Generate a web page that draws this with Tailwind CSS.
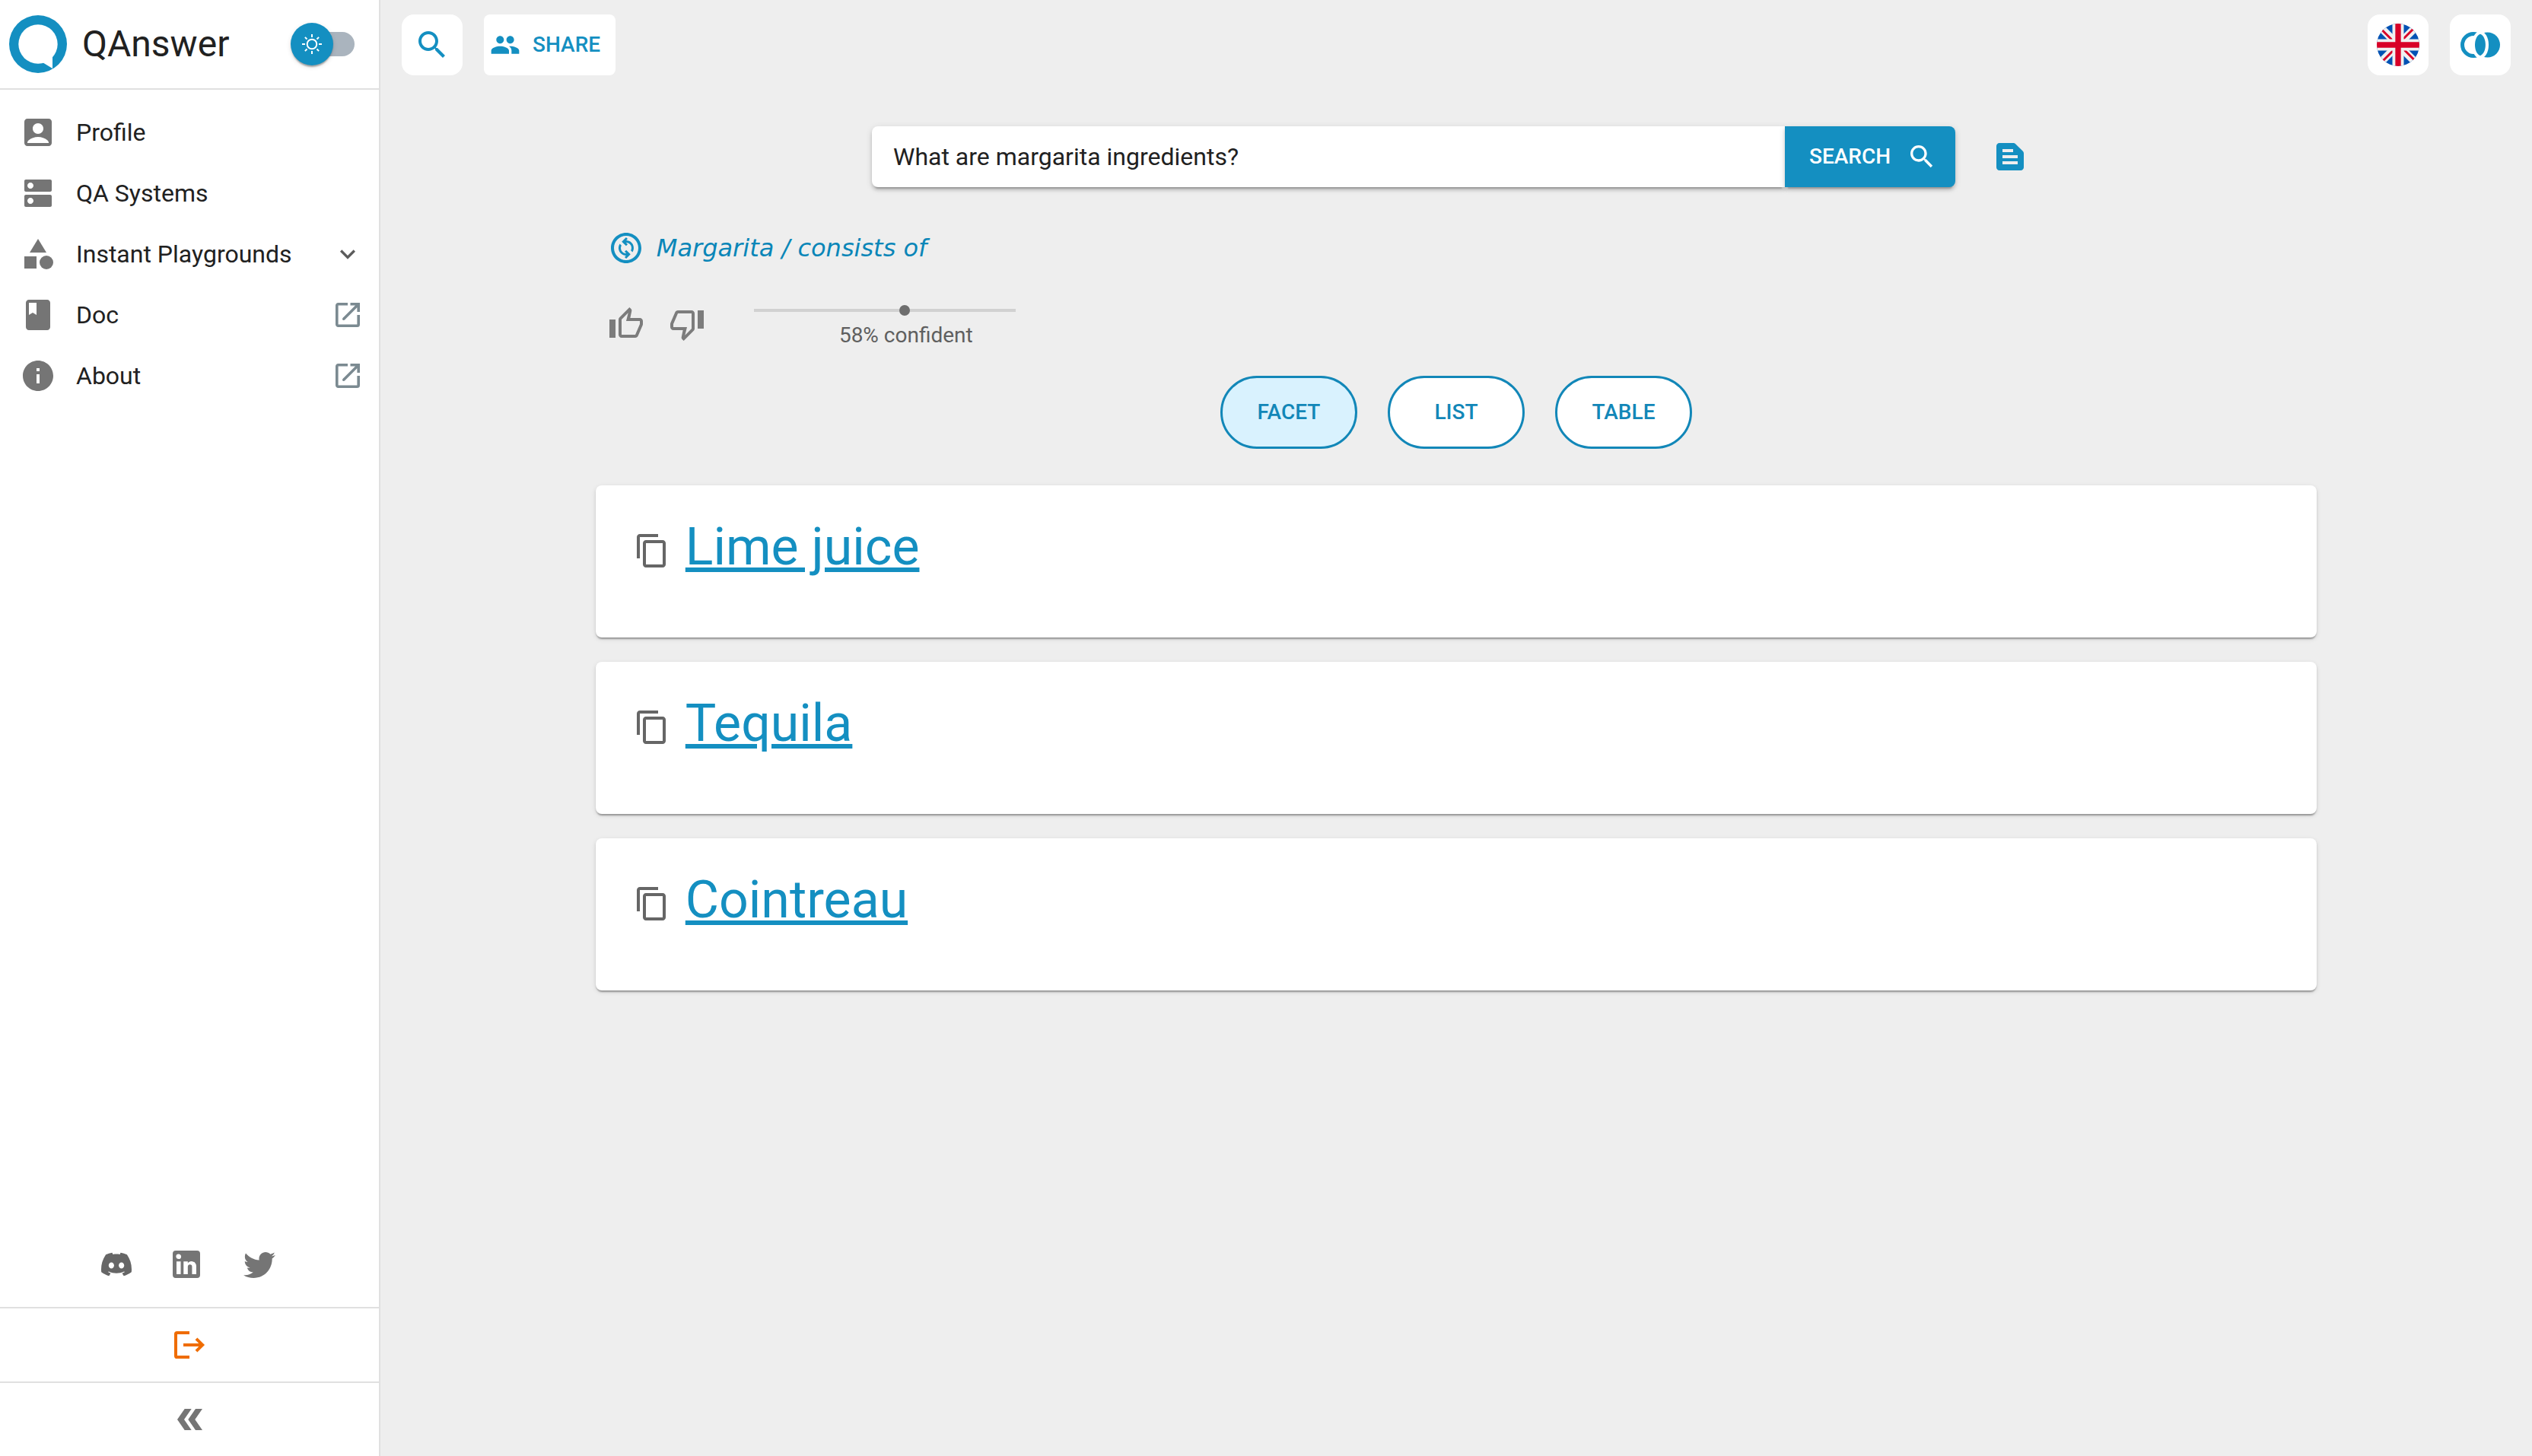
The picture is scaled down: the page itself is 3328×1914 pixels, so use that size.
<!DOCTYPE html>
<html lang="en">
<head>
<meta charset="utf-8">
<meta name="viewport" content="width=device-width, initial-scale=1">
<title>QAnswer</title>
<script src="https://cdn.jsdelivr.net/npm/@tailwindcss/browser@4"></script>
</head>
<body class="flex min-h-screen bg-[#eeeeee] font-['Roboto',sans-serif] text-[32px] leading-[48px] text-[#212121]">

<!-- Sidebar -->
<aside class="flex w-[500px] shrink-0 flex-col border-r-2 border-[#e0e0e0] bg-white">
  <header class="flex h-[118px] items-center border-b-2 border-[#e0e0e0] pr-8 pl-3">
    <svg class="size-[76px]" viewBox="0 0 76 76" aria-hidden="true">
      <circle cx="38" cy="38" r="38" fill="#148fc1"/>
      <circle cx="38" cy="38" r="25.7" fill="#fff"/>
      <path d="M57 54v16L45.5 63 40 60z" fill="#fff"/>
    </svg>
    <span class="ml-5 text-[48px] leading-[64px]">QAnswer</span>
    <label class="relative ml-auto flex h-14 w-[84px] items-center">
      <input type="checkbox" class="peer sr-only" aria-label="Dark mode">
      <span class="ml-1 h-8 w-20 rounded-full bg-[#aab4be]"></span>
      <span class="absolute top-0 left-0 flex size-14 items-center justify-center rounded-full bg-[#148fc1] shadow-[0_4px_2px_-2px_rgba(0,0,0,0.2),0_2px_2px_rgba(0,0,0,0.14),0_2px_6px_rgba(0,0,0,0.12)]">
        <svg class="size-[26px]" viewBox="0 0 26 26" fill="none" stroke="#fff" stroke-width="2" aria-hidden="true">
          <circle cx="13" cy="13" r="6.3"/>
          <path d="M13 0v4M13 22v4M0 13h4M22 13h4M3.9 3.9l2.6 2.6M19.5 19.5l2.6 2.6M3.9 22.1l2.6-2.6M19.5 6.5l2.6-2.6"/>
        </svg>
      </span>
    </label>
  </header>

  <nav class="flex flex-col pt-4">
    <a href="#profile" class="flex h-20 items-center gap-[26px] pr-[25px] pl-[26px]">
      <svg class="size-12 fill-[#757575]" viewBox="0 0 24 24"><path d="M19 3H5c-1.1 0-2 .9-2 2v14c0 1.1.9 2 2 2h14c1.1 0 2-.9 2-2V5c0-1.1-.9-2-2-2zm-7 3c1.93 0 3.5 1.57 3.5 3.5S13.93 13 12 13s-3.5-1.57-3.5-3.5S10.07 6 12 6zm7 13H5v-.23c0-.62.28-1.2.76-1.58C7.47 15.82 9.64 15 12 15s4.53.82 6.24 2.19c.48.38.76.97.76 1.58V19z"/></svg>
      <span>Profile</span>
    </a>
    <a href="#systems" class="flex h-20 items-center gap-[26px] pr-[25px] pl-[26px]">
      <svg class="size-12 fill-[#757575]" viewBox="0 0 24 24"><path d="M20 13H4c-.55 0-1 .45-1 1v6c0 .55.45 1 1 1h16c.55 0 1-.45 1-1v-6c0-.55-.45-1-1-1zM7 19c-1.1 0-2-.9-2-2s.9-2 2-2 2 .9 2 2-.9 2-2 2zM20 3H4c-.55 0-1 .45-1 1v6c0 .55.45 1 1 1h16c.55 0 1-.45 1-1V4c0-.55-.45-1-1-1zM7 9c-1.1 0-2-.9-2-2s.9-2 2-2 2 .9 2 2-.9 2-2 2z"/></svg>
      <span>QA Systems</span>
    </a>
    <button type="button" class="flex h-20 items-center gap-[26px] pr-[25px] pl-[26px] text-left">
      <svg class="size-12 fill-[#757575]" viewBox="0 0 24 24"><path d="m12 2-5.5 9h11z"/><circle cx="17.5" cy="17.5" r="4.5"/><path d="M3 13.5h8v8H3z"/></svg>
      <span>Instant Playgrounds</span>
      <svg class="-mr-1 ml-auto size-10 fill-[#5c5c5c]" viewBox="0 0 24 24"><path d="M7.41 8.59 12 13.17l4.59-4.58L18 10l-6 6-6-6 1.41-1.41z"/></svg>
    </button>
    <a href="#doc" class="flex h-20 items-center gap-[26px] pr-[25px] pl-[26px]">
      <svg class="size-12 fill-[#757575]" viewBox="0 0 24 24"><path d="M18 2H6c-1.1 0-2 .9-2 2v16c0 1.1.9 2 2 2h12c1.1 0 2-.9 2-2V4c0-1.1-.9-2-2-2zM6 4h5v8l-2.500-1.500L6 12V4z"/></svg>
      <span>Doc</span>
      <svg class="ml-auto size-8" viewBox="0 0 32 32" fill="none" stroke="#7b8a91" stroke-width="3.6"><path d="M16 1.800H3.500a1.700 1.700 0 0 0-1.700 1.700v25a1.700 1.700 0 0 0 1.700 1.700h25a1.700 1.700 0 0 0 1.700-1.700V16M19.500 1.800h10.700V12M10.500 21.500l18.500-18.500" stroke-width="3.600"/><path d="M10.500 21.500l1-1" stroke-linecap="round" stroke-width="3"/></svg>
    </a>
    <a href="#about" class="flex h-20 items-center gap-[26px] pr-[25px] pl-[26px]">
      <svg class="size-12 fill-[#757575]" viewBox="0 0 24 24"><path d="M12 2C6.480 2 2 6.480 2 12s4.480 10 10 10 10-4.480 10-10S17.520 2 12 2zm1 15h-2v-6h2v6zm0-8h-2V7h2v2z"/></svg>
      <span>About</span>
      <svg class="ml-auto size-8" viewBox="0 0 32 32" fill="none" stroke="#7b8a91" stroke-width="3.6"><path d="M16 1.800H3.500a1.700 1.700 0 0 0-1.700 1.700v25a1.700 1.700 0 0 0 1.700 1.700h25a1.700 1.700 0 0 0 1.700-1.700V16M19.500 1.800h10.700V12M10.500 21.500l18.500-18.500" stroke-width="3.600"/><path d="M10.500 21.500l1-1" stroke-linecap="round" stroke-width="3"/></svg>
    </a>
  </nav>

  <div class="mt-auto flex justify-center gap-12 pr-0 pb-8">
    <a href="#discord" aria-label="Discord" class="flex h-12 w-10 items-center">
      <svg class="size-10 fill-[#666666]" viewBox="0 0 24 24"><path d="M20.317 4.3698a19.7913 19.7913 0 00-4.8851-1.5152.0741.0741 0 00-.0785.0371c-.211.3753-.4447.8648-.6083 1.2495-1.8447-.2762-3.68-.2762-5.4868 0-.1636-.3933-.4058-.8742-.6177-1.2495a.077.077 0 00-.0785-.037 19.7363 19.7363 0 00-4.8852 1.515.0699.0699 0 00-.0321.0277C.5334 9.0458-.319 13.5799.0992 18.0578a.0824.0824 0 00.0312.0561c2.0528 1.5076 4.0413 2.4228 5.9929 3.0294a.0777.0777 0 00.0842-.0276c.4616-.6304.8731-1.2952 1.226-1.9942a.076.076 0 00-.0416-.1057c-.6528-.2476-1.2743-.5495-1.8722-.8923a.077.077 0 01-.0076-.1277c.1258-.0943.2517-.1923.3718-.2914a.0743.0743 0 01.0776-.0105c3.9278 1.7933 8.18 1.7933 12.0614 0a.0739.0739 0 01.0785.0095c.1202.099.246.1981.3728.2924a.077.077 0 01-.0066.1276 12.2986 12.2986 0 01-1.873.8914.0766.0766 0 00-.0407.1067c.3604.698.7719 1.3628 1.225 1.9932a.076.076 0 00.0842.0286c1.961-.6067 3.9495-1.5219 6.0023-3.0294a.077.077 0 00.0313-.0552c.5004-5.177-.8382-9.6739-3.5485-13.6604a.061.061 0 00-.0312-.0286zM8.02 15.3312c-1.1825 0-2.1569-1.0857-2.1569-2.419 0-1.3332.9555-2.4189 2.157-2.4189 1.2108 0 2.1757 1.0952 2.1568 2.419 0 1.3332-.9555 2.4189-2.1569 2.4189zm7.9748 0c-1.1825 0-2.1569-1.0857-2.1569-2.419 0-1.3332.9554-2.4189 2.1569-2.4189 1.2108 0 2.1757 1.0952 2.1568 2.419 0 1.3332-.946 2.4189-2.1568 2.4189z"/></svg>
    </a>
    <a href="#linkedin" aria-label="LinkedIn">
      <svg class="size-12 fill-[#757575]" viewBox="0 0 24 24"><path d="M19 3a2 2 0 0 1 2 2v14a2 2 0 0 1-2 2H5a2 2 0 0 1-2-2V5a2 2 0 0 1 2-2h14m-.5 15.500v-5.300a3.260 3.260 0 0 0-3.260-3.260c-.850 0-1.840.520-2.320 1.300v-1.110h-2.790v8.370h2.790v-4.930c0-.770.620-1.400 1.390-1.400a1.400 1.400 0 0 1 1.400 1.400v4.930h2.790M6.880 8.560a1.680 1.680 0 0 0 1.680-1.680c0-.930-.750-1.690-1.680-1.690a1.690 1.690 0 0 0-1.690 1.690c0 .930.760 1.680 1.690 1.680m1.390 9.940v-8.370H5.500v8.370h2.770z"/></svg>
    </a>
    <a href="#twitter" aria-label="Twitter">
      <svg class="size-12 fill-[#757575]" viewBox="0 0 24 24"><path d="M22.46 6c-.77.35-1.6.58-2.46.69.88-.53 1.56-1.37 1.88-2.38-.83.5-1.75.85-2.72 1.05C18.37 4.5 17.26 4 16 4c-2.35 0-4.27 1.92-4.27 4.29 0 .34.04.67.11.98C8.28 9.09 5.11 7.38 3 4.79c-.37.63-.58 1.37-.58 2.15 0 1.49.75 2.81 1.91 3.56-.71 0-1.37-.2-1.95-.5v.03c0 2.08 1.48 3.82 3.44 4.21a4.22 4.22 0 0 1-1.93.07 4.28 4.28 0 0 0 4 2.98 8.521 8.521 0 0 1-5.33 1.84c-.34 0-.68-.02-1.02-.06C3.44 20.29 5.7 21 8.12 21 16 21 20.33 14.46 20.33 8.79c0-.19 0-.37-.01-.56.84-.6 1.56-1.36 2.14-2.23z"/></svg>
    </a>
  </div>
  <button type="button" aria-label="Log out" class="flex h-[98px] items-center justify-center border-t-2 border-[#e0e0e0]">
    <svg class="size-12" viewBox="0 0 24 24" fill="none" stroke="#ef6c00" stroke-width="2"><path d="M12 4H3.800Q3 4 3 4.800v14.400q0 .8.800.8H12M8 12h12M16.500 7.900l4.100 4.100-4.100 4.100"/></svg>
  </button>
  <button type="button" aria-label="Collapse sidebar" class="flex h-[98px] items-center justify-center border-t-2 border-[#e0e0e0]">
    <svg class="h-7 w-[33px] fill-[#757575]" viewBox="0 0 33 28"><path d="M9.700 0h9L9 14l9.700 14h-9L0 14z"/><path d="M24 0h9l-9.700 14L33 28h-9l-9.700-14z"/></svg>
  </button>
</aside>

<main class="min-w-0 flex-1">
  <!-- Toolbar -->
  <div class="flex h-[118px] items-center gap-7 px-7">
    <button type="button" aria-label="Search" class="flex size-20 items-center justify-center rounded-2xl bg-white">
      <svg class="size-12 fill-[#148fc1]" viewBox="0 0 24 24"><path d="M15.500 14h-.790l-.280-.270C15.410 12.590 16 11.110 16 9.500 16 5.910 13.090 3 9.500 3S3 5.910 3 9.500 5.910 16 9.500 16c1.610 0 3.090-.590 4.230-1.570l.270.280v.790l5 4.990L20.490 19l-4.990-5zm-6 0C7.010 14 5 11.990 5 9.500S7.010 5 9.500 5 14 7.010 14 9.500 11.990 14 9.500 14z"/></svg>
    </button>
    <button type="button" class="flex h-20 w-[173px] items-center gap-4 rounded-lg bg-white pl-2 text-[28px] font-medium text-[#148fc1]">
      <svg class="size-10 fill-[#148fc1]" viewBox="0 0 24 24"><path d="M16 11c1.660 0 2.990-1.340 2.990-3S17.660 5 16 5c-1.660 0-3 1.340-3 3s1.340 3 3 3zm-8 0c1.660 0 2.990-1.340 2.990-3S9.660 5 8 5C6.340 5 5 6.340 5 8s1.340 3 3 3zm0 2c-2.330 0-7 1.170-7 3.500V19h14v-2.500c0-2.330-4.670-3.500-7-3.500zm8 0c-.290 0-.620.020-.970.050 1.160.840 1.970 1.970 1.970 3.450V19h6v-2.500c0-2.330-4.670-3.500-7-3.500z"/></svg>
      SHARE
    </button>
    <button type="button" aria-label="Language: English" class="ml-auto flex size-20 items-center justify-center rounded-2xl bg-white">
      <svg class="size-14" viewBox="0 0 56 56">
        <clipPath id="disc"><circle cx="28" cy="28" r="28"/></clipPath>
        <g clip-path="url(#disc)">
          <path d="M0 0h56v56H0z" fill="#0052b4"/>
          <path d="M0 0l56 56M56 0L0 56" stroke="#f0f0f0" stroke-width="10"/>
          <path d="M6 7.500L22 23.500M49 6L33 22M7 50l16-16M50 48.500l-16-16" stroke="#d80027" stroke-width="3"/>
          <path d="M28 0v56M0 28h56" stroke="#f0f0f0" stroke-width="15"/>
          <path d="M28 0v56M0 28h56" stroke="#d80027" stroke-width="7.300"/>
        </g>
      </svg>
    </button>
    <button type="button" aria-label="Compare" class="flex size-20 items-center justify-center rounded-2xl bg-white">
      <svg class="h-[34px] w-[52px]" viewBox="0 0 52 34">
        <circle cx="17" cy="17" r="14.500" fill="none" stroke="#148fc1" stroke-width="5"/>
        <circle cx="35.500" cy="17" r="16.500" fill="#148fc1"/>
        <ellipse cx="26" cy="17" rx="11" ry="18" fill="#fff"/>
        <path d="M26 2.800c9.300 3.500 9.300 24.900 0 28.400-9.300-3.500-9.300-24.900 0-28.400z" fill="#148fc1"/>
      </svg>
    </button>
  </div>

  <!-- Query -->
  <form class="mt-12 flex items-center justify-center px-8" onsubmit="return false">
    <input type="text" aria-label="Question" value="What are margarita ingredients?" class="h-20 w-[1200px] min-w-0 rounded-l-lg bg-white px-7 shadow-[0_6px_2px_-4px_rgba(0,0,0,0.2),0_4px_4px_rgba(0,0,0,0.14),0_2px_10px_rgba(0,0,0,0.12)] outline-none">
    <button type="submit" class="flex h-20 w-56 shrink-0 items-center justify-between rounded-r-lg bg-[#148fc1] pr-6 pl-8 text-[28px] font-medium text-white shadow-[0_6px_2px_-4px_rgba(0,0,0,0.2),0_4px_4px_rgba(0,0,0,0.14),0_2px_10px_rgba(0,0,0,0.12)]">
      SEARCH
      <svg class="size-10 fill-white" viewBox="0 0 24 24"><path d="M15.500 14h-.790l-.280-.270C15.410 12.590 16 11.110 16 9.500 16 5.910 13.090 3 9.500 3S3 5.910 3 9.500 5.910 16 9.500 16c1.610 0 3.090-.590 4.230-1.570l.270.280v.790l5 4.990L20.490 19l-4.990-5zm-6 0C7.010 14 5 11.990 5 9.500S7.010 5 9.500 5 14 7.010 14 9.500 11.990 14 9.500 14z"/></svg>
    </button>
    <button type="button" aria-label="Ask over text" class="ml-8 shrink-0 p-4">
      <svg class="size-12 fill-[#148fc1]" viewBox="0 0 24 24"><path d="M20.410 8.410l-4.830-4.830c-.370-.370-.880-.580-1.410-.580H5c-1.100 0-2 .900-2 2v14c0 1.100.900 2 2 2h14c1.100 0 2-.900 2-2V9.830c0-.530-.210-1.040-.590-1.420zM7 7h7v2H7V7zm10 10H7v-2h10v2zm0-4H7v-2h10v2z"/></svg>
    </button>
  </form>

  <div class="mx-auto mt-14 w-4/5">
    <!-- Interpretation -->
    <button type="button" class="flex items-center gap-4 px-4 font-['DejaVu_Sans',sans-serif] text-[#0a86b8] italic">
      <svg class="size-12 fill-[#148fc1]" viewBox="0 0 24 24"><path d="M12 2C6.480 2 2 6.480 2 12c0 5.520 4.480 10 10 10s10-4.480 10-10c0-5.520-4.480-10-10-10zm0 18c-4.410 0-8-3.590-8-8s3.590-8 8-8 8 3.590 8 8-3.590 8-8 8zm4.170-5.240-1.100-1.100c.710-1.330.530-3.010-.590-4.130C13.790 8.840 12.900 8.500 12 8.500c-.030 0-.060.010-.090.010L13 9.600l-1.060 1.060-2.830-2.830L11.940 5 13 6.060l-.960.960c1.270.010 2.530.480 3.500 1.440 1.700 1.710 1.910 4.360.630 6.300zm-1.280 1.410L12.060 19 11 17.940l.950-.950c-1.260-.010-2.520-.500-3.480-1.460-1.710-1.710-1.920-4.350-.640-6.290l1.100 1.100c-.710 1.330-.530 3.010.590 4.130.700.700 1.630 1.040 2.560 1.010L11 14.400l1.060-1.060 2.830 2.830z"/></svg>
      Margarita / consists of
    </button>

    <!-- Feedback and confidence -->
    <div class="mt-9 flex h-20">
      <button type="button" aria-label="Good answer" class="p-4">
        <svg class="size-12 fill-[#7c7c7c]" viewBox="0 0 24 24"><path d="M9 21h9c.83 0 1.54-.5 1.84-1.22l3.02-7.05c.09-.23.14-.47.14-.73v-2c0-1.1-.9-2-2-2h-6.31l.95-4.57.03-.32c0-.41-.17-.79-.44-1.06L14.17 1 7.58 7.59C7.22 7.95 7 8.45 7 9v10c0 1.1.9 2 2 2zM9 9l4.34-4.34L12 10h9v2l-3 7H9V9zM1 9h4v12H1z"/></svg>
      </button>
      <button type="button" aria-label="Bad answer" class="p-4">
        <svg class="size-12 fill-[#7c7c7c]" viewBox="0 0 24 24"><path d="M15 3H6c-.83 0-1.54.5-1.84 1.22l-3.02 7.05c-.09.23-.14.47-.14.73v2c0 1.1.9 2 2 2h6.31l-.95 4.57-.03.32c0 .41.17.79.44 1.06L9.83 23l6.59-6.590c.36-.36.58-.86.58-1.410V5c0-1.1-.9-2-2-2zm0 12l-4.34 4.34L12 14H3v-2l3-7h9v10zm4-12h4v12h-4z"/></svg>
      </button>
      <div class="ml-12 flex w-[344px] flex-col pt-[15px]">
        <input id="confidence" type="range" min="0" max="100" value="58" disabled class="h-3.5 w-full appearance-none bg-transparent [&::-webkit-slider-runnable-track]:h-1 [&::-webkit-slider-runnable-track]:bg-[#d1d1d1] [&::-webkit-slider-thumb]:-mt-[5px] [&::-webkit-slider-thumb]:size-3.5 [&::-webkit-slider-thumb]:appearance-none [&::-webkit-slider-thumb]:rounded-full [&::-webkit-slider-thumb]:bg-[#6e6e6e]">
        <label for="confidence" class="mt-1.5 pl-14 text-center text-[28px] leading-10 text-[#5f5f5f]">58% confident</label>
      </div>
    </div>

    <!-- View selector -->
    <div class="mt-7 flex justify-center gap-10 text-[28px] font-medium text-[#1287b8]">
      <button type="button" aria-pressed="true" class="h-24 w-[180px] rounded-full border-3 border-[#1287b8] bg-[#d9f2fe]">FACET</button>
      <button type="button" aria-pressed="false" class="h-24 w-[180px] rounded-full border-3 border-[#1287b8] bg-white">LIST</button>
      <button type="button" aria-pressed="false" class="h-24 w-[180px] rounded-full border-3 border-[#1287b8] bg-white">TABLE</button>
    </div>

    <!-- Answers -->
    <div class="mt-12 flex flex-col gap-8 pb-8 text-[68px] leading-[84px] text-[#148fc1]">
      <article class="flex h-[200px] items-start gap-5 rounded-lg bg-white px-[50px] pt-[39px] shadow-[0_4px_2px_-2px_rgba(0,0,0,0.2),0_2px_2px_rgba(0,0,0,0.14),0_2px_6px_rgba(0,0,0,0.12)]">
        <button type="button" aria-label="Copy" class="pt-[23px]"><svg class="size-12 fill-[#666666]" viewBox="0 0 24 24"><path d="M16 1H4c-1.100 0-2 .900-2 2v14h2V3h12V1zm3 4H8c-1.100 0-2 .900-2 2v14c0 1.100.900 2 2 2h11c1.100 0 2-.900 2-2V7c0-1.100-.900-2-2-2zm0 16H8V7h11v14z"/></svg></button>
        <a href="#lime-juice" class="underline">Lime juice</a>
      </article>
      <article class="flex h-[200px] items-start gap-5 rounded-lg bg-white px-[50px] pt-[39px] shadow-[0_4px_2px_-2px_rgba(0,0,0,0.2),0_2px_2px_rgba(0,0,0,0.14),0_2px_6px_rgba(0,0,0,0.12)]">
        <button type="button" aria-label="Copy" class="pt-[23px]"><svg class="size-12 fill-[#666666]" viewBox="0 0 24 24"><path d="M16 1H4c-1.100 0-2 .900-2 2v14h2V3h12V1zm3 4H8c-1.100 0-2 .900-2 2v14c0 1.100.900 2 2 2h11c1.100 0 2-.900 2-2V7c0-1.100-.900-2-2-2zm0 16H8V7h11v14z"/></svg></button>
        <a href="#tequila" class="underline">Tequila</a>
      </article>
      <article class="flex h-[200px] items-start gap-5 rounded-lg bg-white px-[50px] pt-[39px] shadow-[0_4px_2px_-2px_rgba(0,0,0,0.2),0_2px_2px_rgba(0,0,0,0.14),0_2px_6px_rgba(0,0,0,0.12)]">
        <button type="button" aria-label="Copy" class="pt-[23px]"><svg class="size-12 fill-[#666666]" viewBox="0 0 24 24"><path d="M16 1H4c-1.100 0-2 .900-2 2v14h2V3h12V1zm3 4H8c-1.100 0-2 .900-2 2v14c0 1.100.900 2 2 2h11c1.100 0 2-.900 2-2V7c0-1.100-.900-2-2-2zm0 16H8V7h11v14z"/></svg></button>
        <a href="#cointreau" class="underline">Cointreau</a>
      </article>
    </div>
  </div>
</main>
</body>
</html>
